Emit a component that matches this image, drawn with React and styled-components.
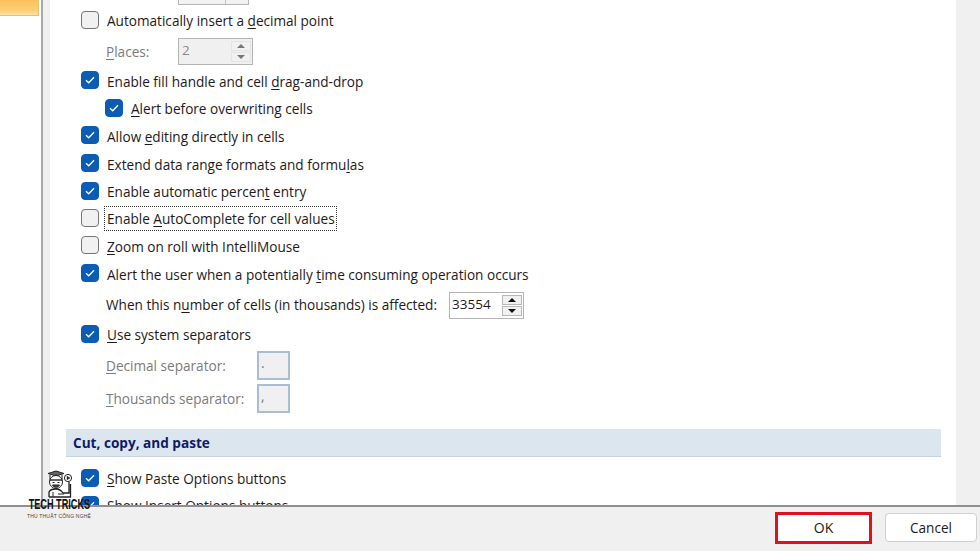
import React from "react";
import styled, { createGlobalStyle } from "styled-components";

const Global = createGlobalStyle`
  html, body { margin: 0; padding: 0; background: #fff; }
  body { font-family: "Open Sans", "Noto Sans", "Liberation Sans", sans-serif; }
`;
const Page = styled.div`
  width: 980px; height: 551px; display: flex; flex-direction: column; overflow: hidden; position: relative;
  font-size: 13.6px; color: #1e1a1a; background: #fff;
`;
const Main = styled.div`flex: 1; min-height: 0; display: flex; overflow: hidden;`;
const Sidebar = styled.div`width: 41px; flex: none; background: #fff; border-right: 2px solid #a9a9a9;`;
const SelectedTab = styled.div`
  width: 39px; height: 16px; box-sizing: border-box;
  background: linear-gradient(180deg, #fbc05c 0%, #fdcf78 70%, #fde3a4 100%);
  border-right: 1px solid #e9c06e; border-bottom: 1px solid #e9c06e;
`;
const Gutter = styled.div`flex: none; width: ${p => p.$w}px; background: #f0f0f0;`;
const Content = styled.div`flex: 1; min-width: 0; background: #fff; overflow: hidden; display: flex; flex-direction: column; padding: 0 15px 0 16px;`;
const Row = styled.div`
  height: ${p => p.$h}px; flex: none; display: flex; align-items: center; white-space: nowrap;
  padding-left: ${p => p.$indent || 0}px;
  color: ${p => p.$muted ? "#7b7b7b" : "inherit"};
`;
const CutSpinnerRow = styled.div`height: 6px; flex: none; padding-left: 112px;`;
const CutSpinner = styled.div`
  width: 69px; height: 4px; display: flex; background: #f2f2f2; border: 1px solid #b5b5b5; border-top: none;
`;
const CutButtons = styled.div`margin-left: auto; width: 22px; border-left: 1px solid #c4c4c4;`;
const Box = styled.span`
  flex: none; width: 18px; height: 18px; box-sizing: border-box; border-radius: 4px; margin: 0 8px 2px 0;
  display: inline-flex; align-items: center; justify-content: center;
  background: ${p => p.$on ? "#0b5cb5" : "#f1f1f1"};
  border: 1px solid ${p => p.$on ? "#0b5cb5" : "#757575"};
`;
const Focus = styled.span`outline: 1px dotted #333; outline-offset: 0; padding: 2px 1px 2px 2px; margin-left: -2px;`;
const Label = styled.span``;
const MutedLabel = styled(Label)`width: ${p => p.$w}px; flex: none;`;
const Key = styled.span`text-decoration: underline; text-underline-offset: 2px; text-decoration-thickness: 1px;`;
const Spinner = styled.div`
  width: ${p => p.$w}px; height: 27px; box-sizing: border-box; flex: none; display: flex;
  margin-top: ${p => p.$drop || 0}px;
  border: 1px solid #b4b4b4; background: ${p => p.$dim ? "#f0f0f0" : "#fff"};
  color: ${p => p.$dim ? "#8a8a8a" : "#1e1a1a"};
`;
const SpinValue = styled.div`flex: 1; padding-left: ${p => p.$dim ? 3 : 2}px; line-height: 23px; font-size: 13.5px;`;
const SpinButtons = styled.div`
  width: 22px; flex: none; display: flex; flex-direction: column; gap: 1px; padding: 2px 1px; box-sizing: border-box;
`;
const SpinButton = styled.div`
  flex: 1; display: flex; align-items: center; justify-content: center;
  background: #f1f1f1; border: 1px solid ${p => p.$dim ? "#e4e4e4" : "#b8b8b8"};
`;
const Arrow = styled.span`
  width: 0; height: 0; border-left: 4px solid transparent; border-right: 4px solid transparent;
  ${p => p.$up ? `border-bottom: 4px solid ${p.$dim ? "#777" : "#111"};` : `border-top: 4px solid ${p.$dim ? "#777" : "#111"};`}
`;
const SepBox = styled.div`
  width: 33px; height: 29px; box-sizing: border-box; flex: none; background: #f0f0f0; border: 2px solid #a9bdd6;
  color: #777; padding-left: 2px; line-height: 20px;
`;
const Band = styled.div`
  height: 27px; flex: none; background: #dce6ee; border-bottom: 1px solid #c9d2da; display: flex; align-items: center;
  padding-left: 7px; font-weight: 700; font-size: 13.6px; color: #0e1b66; margin: 13px 0 8px;
`;
const Footer = styled.div`
  height: 46px; flex: none; box-sizing: border-box; background: #f0f0f0;
  box-shadow: inset 0 2px 0 #8f8f8f; padding: 2px 3px 3px 0;
  display: flex; align-items: center; justify-content: flex-end; gap: 13px;
`;
const OkButton = styled.div`
  width: 97px; height: 32px; box-sizing: border-box; border: 3px solid #e2101f; background: #fff;
  display: flex; align-items: center; justify-content: center; font-size: 14px; color: #1a1a1a;
`;
const CancelButton = styled.div`
  width: 92px; height: 29px; box-sizing: border-box; border: 1px solid #cfcfcf; border-radius: 4px; background: #fff;
  display: flex; align-items: center; justify-content: center; font-size: 13.6px; color: #1a1a1a;
`;
const Logo = styled.div`
  position: absolute; left: 27px; top: 470px; width: 64px; display: flex; flex-direction: column; align-items: center;
`;
const LogoIcon = styled.svg`display: block; margin-left: -2px;`;
const LogoTitle = styled.div`
  font-family: "Liberation Sans", sans-serif; font-weight: 700; font-size: 15px; line-height: 12px;
  color: #111; white-space: nowrap; transform: scaleX(0.61);
`;
const LogoSub = styled.div`
  font-family: "Liberation Sans", sans-serif; font-size: 5px; line-height: 6px; color: #444; white-space: nowrap; letter-spacing: 0.2px; margin-top: 3px;
`;

const Check = () => (
  <svg width="10" height="8" viewBox="0 0 10 8" fill="none">
    <path d="M1 4.2 L3.7 6.8 L9 1.2" stroke="#fff" strokeWidth="1.3" />
  </svg>
);
const CheckRow = ({ on, indent, h, children }) => (
  <Row $h={h} $indent={indent}>
    <Box $on={on}>{on && <Check />}</Box>
    {children}
  </Row>
);
const SpinBox = ({ value, dim, drop }) => (
  <Spinner $w={75} $dim={dim} $drop={drop}>
    <SpinValue $dim={dim}>{value}</SpinValue>
    <SpinButtons>
      <SpinButton $dim={dim}><Arrow $up $dim={dim} /></SpinButton>
      <SpinButton $dim={dim}><Arrow $dim={dim} /></SpinButton>
    </SpinButtons>
  </Spinner>
);

export default function App() {
  return (
    <Page>
      <Global />
      <Main>
        <Sidebar><SelectedTab /></Sidebar>
        <Gutter $w={7} />
        <Content>
          <CutSpinnerRow><CutSpinner><CutButtons /></CutSpinner></CutSpinnerRow>
          <CheckRow h={29} indent={15}><Label>Automatically insert a <Key>d</Key>ecimal point</Label></CheckRow>
          <Row $h={32} $indent={40} $muted>
            <MutedLabel $w={72}><Key>P</Key>laces:</MutedLabel>
            <SpinBox value="2" dim />
          </Row>
          <CheckRow on h={28} indent={15}><Label>Enable fill handle and cell <Key>d</Key>rag-and-drop</Label></CheckRow>
          <CheckRow on h={27} indent={39}><Label><Key>A</Key>lert before overwriting cells</Label></CheckRow>
          <CheckRow on h={28} indent={15}><Label>Allow <Key>e</Key>diting directly in cells</Label></CheckRow>
          <CheckRow on h={28} indent={15}><Label>Extend data range formats and formu<Key>l</Key>as</Label></CheckRow>
          <CheckRow on h={27} indent={15}><Label>Enable automatic percen<Key>t</Key> entry</Label></CheckRow>
          <CheckRow h={27} indent={15}><Focus><Label>Enable <Key>A</Key>utoComplete for cell values</Label></Focus></CheckRow>
          <CheckRow h={28} indent={15}><Label><Key>Z</Key>oom on roll with IntelliMouse</Label></CheckRow>
          <CheckRow on h={28} indent={15}><Label>Alert the user when a potentially <Key>t</Key>ime consuming operation occurs</Label></CheckRow>
          <Row $h={32} $indent={40}>
            <MutedLabel $w={343}>When this n<Key>u</Key>mber of cells (in thousands) is affected:</MutedLabel>
            <SpinBox value="33554" drop={2} />
          </Row>
          <CheckRow on h={29} indent={15}><Label><Key>U</Key>se system separators</Label></CheckRow>
          <Row $h={32} $indent={40} $muted>
            <MutedLabel $w={151}><Key>D</Key>ecimal separator:</MutedLabel>
            <SepBox>.</SepBox>
          </Row>
          <Row $h={35} $indent={40} $muted>
            <MutedLabel $w={151}><Key>T</Key>housands separator:</MutedLabel>
            <SepBox>,</SepBox>
          </Row>
          <Band>Cut, copy, and paste</Band>
          <CheckRow on h={27} indent={15}><Label><Key>S</Key>how Paste Options buttons</Label></CheckRow>
          <CheckRow on h={27} indent={15}><Label>Show <Key>I</Key>nsert Options buttons</Label></CheckRow>
        </Content>
        <Gutter $w={24} />
      </Main>
      <Footer>
        <OkButton>OK</OkButton>
        <CancelButton>Cancel</CancelButton>
      </Footer>
      <Logo>
        <LogoIcon width="27" height="28" viewBox="0 0 27 28" fill="none" stroke="#222" strokeWidth="1">
          <path d="M3 3.5 L11 1 L19 3.5 L11 6 Z" fill="#666" />
          <path d="M5 5 V9 M17 5 V9" />
          <path d="M11 6 V4" />
          <circle cx="11" cy="12" r="6.5" fill="#fff" />
          <path d="M4.5 10 H17.5" strokeWidth="1.4" />
          <path d="M7.5 12.5 h2 M12.5 12.5 h2" />
          <path d="M7.5 15 C9 18 13 18 14.5 15 Z" fill="#444" />
          <circle cx="23" cy="8" r="3.6" fill="#fff" />
          <path d="M22 6.2 L25 8 L22 9.8 Z" fill="#222" strokeWidth="0.4" />
          <path d="M4 27 V22 C5 19.5 8 19 11 19 C14 19 16 20 18 23 L24 23 V12 M25.5 14 V27 H4" strokeWidth="1.3" />
          <path d="M8 22 V27 M13 24 H19" />
        </LogoIcon>
        <LogoTitle>TECH TRICKS</LogoTitle>
        <LogoSub>THỦ THUẬT CÔNG NGHỆ</LogoSub>
      </Logo>
    </Page>
  );
}
